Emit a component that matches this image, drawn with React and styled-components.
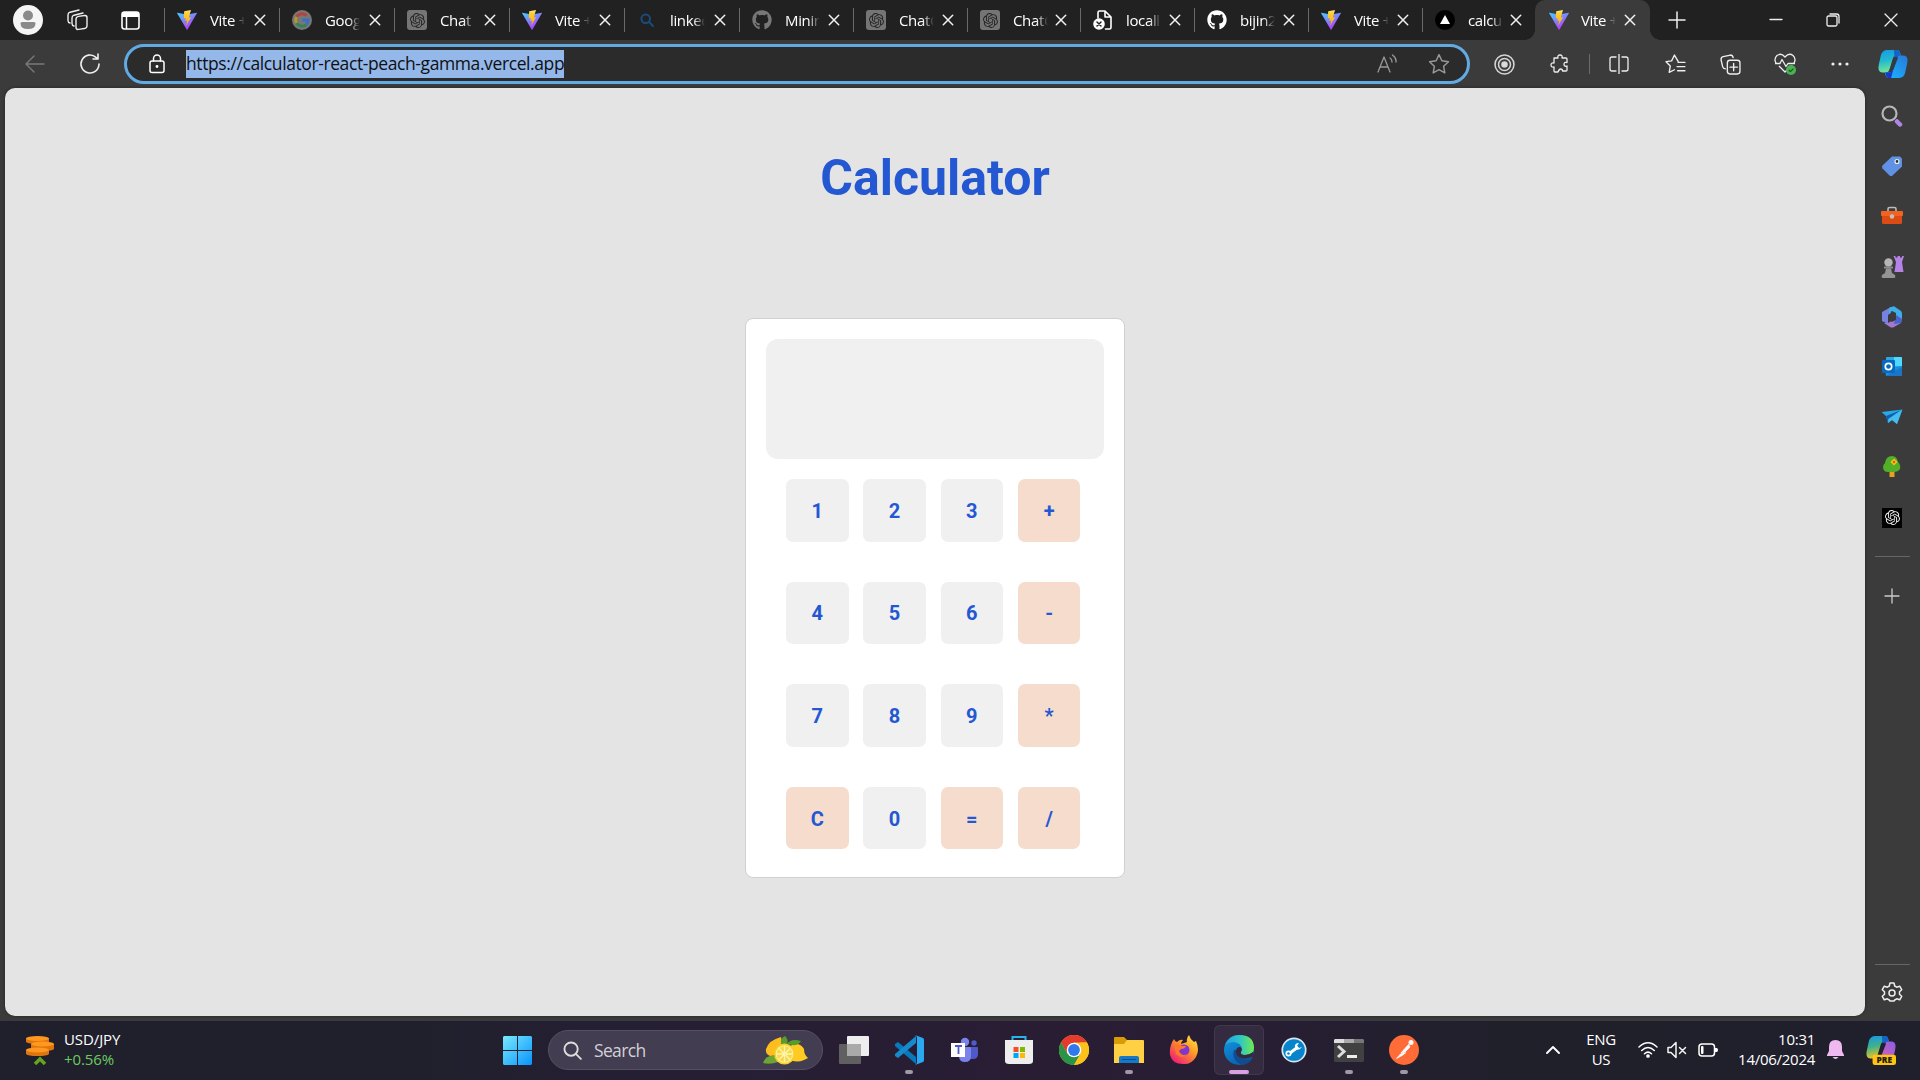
import React from "react";
import styled, { createGlobalStyle } from "styled-components";
import { FaGithub } from "react-icons/fa";
import { SiOpenai } from "react-icons/si";

const ui = `"Open Sans", "Noto Sans", sans-serif`;

const GlobalStyle = createGlobalStyle`
  * { box-sizing: border-box; }
  body { margin: 0; background: #3b3b3b; overflow: hidden; }
  button { border: 0; padding: 0; margin: 0; background: none; color: inherit; font: inherit; }
  svg { display: block; flex: none; }
`;

const Desktop = styled.div`
  width: 1920px;
  height: 1080px;
  display: flex;
  flex-direction: column;
  background: #3b3b3b;
  color: #fff;
  font-family: ${ui};
`;

const TabStrip = styled.div`
  height: 40px;
  display: flex;
  background: #212121;
`;

const Slot = styled.div`
  width: ${(p) => p.$w}px;
  height: 100%;
  flex: none;
  display: flex;
  align-items: center;
  justify-content: center;
`;

const TabList = styled.div`
  display: flex;
  margin-left: 4px;
`;

const Tab = styled.div`
  width: ${(p) => p.$w}px;
  display: flex;
  align-items: center;
  padding-left: ${(p) => (p.$active ? 14 : 13)}px;
  border-radius: ${(p) => (p.$active ? "10px 10px 0 0" : 0)};
  background: ${(p) => (p.$active ? "#3b3b3b" : "linear-gradient(#6a6a6a, #6a6a6a) 0 8px / 1px 24px no-repeat")};
  position: relative;
  &::before, &::after {
    content: "";
    display: ${(p) => (p.$active ? "block" : "none")};
    position: absolute;
    bottom: 0;
    width: 10px;
    height: 10px;
  }
  &::before { left: -10px; background: radial-gradient(circle at 0 0, transparent 9.5px, #3b3b3b 10px); }
  &::after { right: -10px; background: radial-gradient(circle at 100% 0, transparent 9.5px, #3b3b3b 10px); }
`;

const TabTitle = styled.span`
  width: 36px;
  margin-left: ${(p) => (p.$active ? 12 : 13)}px;
  margin-right: ${(p) => p.$gap}px;
  overflow: hidden;
  white-space: nowrap;
  font-size: 15px;
  line-height: 22px;
  letter-spacing: -0.35px;
  mask-image: linear-gradient(90deg, #000 65%, transparent 97%);
`;

const Toolbar = styled.div`
  height: 48px;
  display: flex;
  padding-left: 5px;
  background: #3b3b3b;
`;

const AddressBar = styled.div`
  width: 1346px;
  height: 40px;
  margin: 4px 6px 0 9px;
  display: flex;
  align-items: center;
  border: 3px solid #62aae2;
  border-radius: 20px;
  background: #2b2b2b;
`;

const Url = styled.span`
  width: 378px;
  height: 28px;
  margin-right: auto;
  background: #95b8ea;
  color: #101010;
  font-size: 17.5px;
  line-height: 27px;
  white-space: nowrap;
  letter-spacing: -0.4px;
`;

const Divider = styled.div`
  width: 1px;
  height: 20px;
  margin: 14px 1px 0 1px;
  background: #6b6b6b;
`;

const Body = styled.div`
  height: 932px;
  display: flex;
  padding: 0 0 4px 5px;
`;

const Page = styled.main`
  width: 1860px;
  height: 928px;
  display: flex;
  flex-direction: column;
  align-items: center;
  border-radius: 10px;
  background: #e4e4e4;
  font-family: Roboto, sans-serif;
  color: #2458d3;
  box-shadow: 0 0 3px #222;
`;

const Heading = styled.h1`
  margin: 60px 0 0;
  height: 60px;
  font-size: 50px;
  line-height: 60px;
  font-weight: 700;
`;

const Calculator = styled.section`
  width: 380px;
  height: 560px;
  margin-top: 110px;
  padding: 20px;
  border: 1px solid #d0d0d0;
  border-radius: 8px;
  background: #fff;
`;

const Display = styled.div`
  height: 120px;
  border-radius: 12px;
  background: #f0f0f0;
`;

const Keypad = styled.div`
  display: grid;
  grid-template-columns: repeat(4, 62.5px);
  grid-auto-rows: 62.5px;
  column-gap: 14.8px;
  row-gap: 40.1px;
  padding: 20px 0 0 20px;
`;

const Key = styled.button`
  padding-top: 1px;
  border-radius: 7px;
  background: ${(p) => (p.$accent ? "#f5dccd" : "#f0f0f0")};
  color: #2458d3;
  font-size: 20px;
  font-weight: 700;
  line-height: 24px;
`;

const Sidebar = styled.aside`
  width: 55px;
  display: flex;
  flex-direction: column;
  align-items: center;
  padding-top: 3px;
`;

const SideItem = styled.div`
  height: ${(p) => p.$h || 50.2}px;
  display: flex;
  align-items: center;
  margin-right: 1px;
`;

const SideLine = styled.div`
  width: 35px;
  height: 1px;
  margin-top: ${(p) => p.$top};
  background: #666;
`;

const Taskbar = styled.footer`
  height: 60px;
  display: flex;
  align-items: center;
  box-shadow: inset 0 1px 0 #3a3942;
  background: linear-gradient(90deg, #20202c 0, #20202c 22%, #251f34 32%, #291d34 55%, #271e33 66%, #20202b 78%, #20202c 100%);
`;

const Widget = styled.div`
  width: 490px;
  padding-left: 25px;
  display: flex;
  align-items: center;
`;

const Lines = styled.div`
  width: ${(p) => p.$w || "auto"};
  text-align: ${(p) => p.$align || "left"};
  margin-left: ${(p) => p.$ml || 0}px;
  padding-bottom: 3px;
  font-size: 15px;
  line-height: 20px;
  letter-spacing: ${(p) => p.$ls || "-0.27px"};
  white-space: nowrap;
`;

const Gain = styled.div`
  color: #6ccb5f;
`;

const SearchBox = styled.div`
  width: 275px;
  height: 40px;
  margin: 0 3.5px 0 3px;
  padding: 0 14px;
  display: flex;
  align-items: center;
  border: 1px solid #55515f;
  border-radius: 20px;
  background: #423d50;
  color: #d2d0d7;
  font-size: 17.5px;
  letter-spacing: -0.65px;
`;

const SearchText = styled.span`
  margin-left: 12px;
  margin-right: auto;
`;

const TaskApp = styled.div`
  width: 50px;
  height: 50px;
  margin: 0 2.5px;
  display: flex;
  align-items: center;
  justify-content: center;
  position: relative;
  border-radius: 6px;
  background: ${(p) => (p.$active ? "#342b41" : "transparent")};
  box-shadow: ${(p) => (p.$active ? "inset 0 0 0 1px #40384b" : "none")};
  &::after {
    content: "";
    display: ${(p) => (p.$running || p.$active ? "block" : "none")};
    position: absolute;
    bottom: 1px;
    left: ${(p) => (p.$active ? 15 : 21)}px;
    width: ${(p) => (p.$active ? 20 : 8)}px;
    height: 4px;
    border-radius: 2px;
    background: ${(p) => (p.$active ? "#d9a0e2" : "#9d99a5")};
  }
`;

const Tray = styled.div`
  height: 100%;
  margin-left: auto;
  padding-right: 14px;
  display: flex;
  align-items: center;
`;

const ChatBadge = styled.span`
  width: 20px;
  height: 20px;
  display: flex;
  align-items: center;
  justify-content: center;
  border-radius: ${(p) => (p.$dark ? 0 : 3)}px;
  background: ${(p) => (p.$dark ? "#000" : "#757575")};
  color: ${(p) => (p.$dark ? "#eee" : "#242424")};
`;

const Line = ({ s = 20, w = 1.3, c = "#eee", vb = 20, children }) => (
  <svg width={s} height={s} viewBox={`0 0 ${vb} ${vb}`} fill="none" stroke={c} strokeWidth={w} strokeLinecap="round" strokeLinejoin="round">
    {children}
  </svg>
);

const ViteIcon = () => (
  <svg width="20" height="20" viewBox="0 0 20 20">
    <defs>
      <linearGradient id="vp" x1="0" y1="0" x2=".6" y2="1"><stop stopColor="#41d1ff" /><stop offset="1" stopColor="#bd34fe" /></linearGradient>
      <linearGradient id="vb" x1="0" y1="0" x2="0" y2="1"><stop stopColor="#ffea83" /><stop offset=".2" stopColor="#ffd030" /><stop offset="1" stopColor="#ffa800" /></linearGradient>
    </defs>
    <path d="M.2 2.8 10 4.5l9.8-1.7c.2 0 .3.1.2.3L10.3 19.8c-.1.2-.4.2-.5 0L0 3.1c0-.2 0-.3.2-.3Z" fill="url(#vp)" />
    <path d="M14 0 7.2 1.3 6.7 8.5l2-.4-.5 3 2-.5-1.1 5.2 5-8.6-2.3.4L14 0Z" fill="url(#vb)" />
  </svg>
);

const GoogleIcon = () => (
  <svg width="20" height="20" viewBox="0 0 20 20" fill="none" strokeWidth="2.800">
    <circle cx="10" cy="10" r="10" fill="#777" />
    <path d="M14.600 5.800A6.200 6.200 0 0 0 4.600 6.900" stroke="#b94137" />
    <path d="M4.600 6.900a6.200 6.200 0 0 0 0 6.200" stroke="#b59728" />
    <path d="M4.600 13.100a6.200 6.200 0 0 0 9.500 1.500" stroke="#328550" />
    <path d="M10.200 10h6a6.200 6.200 0 0 1-2.100 4.600" stroke="#3b6fc6" />
  </svg>
);

const SearchTabIcon = () => (
  <Line c="#194c7b" w="2"><circle cx="8.7" cy="8.7" r="4.3" /><path d="m12 12 4 4" /></Line>
);

const LocalIcon = () => (
  <Line c="#fff" w="1.6">
    <path d="M5 8V2.5C5 1.5 5.5 1 6.500 1H12l6 6v10.500c0 1-.6 1.500-1.500 1.500h-4M12 1v6h6" />
    <circle cx="6" cy="14" r="5" fill="#fff" />
    <path d="m4 12 4 4m0-4-4 4" stroke="#222" strokeWidth="1.5" />
  </Line>
);

const VercelIcon = () => (
  <svg width="20" height="20" viewBox="0 0 20 20"><circle cx="10" cy="10" r="10" fill="#000" /><path d="m10 5 5 9H5Z" fill="#fff" /></svg>
);

const ChatIcon = ({ dark }) => <ChatBadge $dark={dark}><SiOpenai size={15} /></ChatBadge>;

const CloseIcon = () => <Line s={12} vb={12} w="1.5" c="#f2f2f2"><path d="m1.300 1.300 9.400 9.400m0-9.400-9.400 9.400" /></Line>;

const tabs = [
  [115, <ViteIcon />, "Vite +"],
  [115, <GoogleIcon />, "Goog"],
  [115, <ChatIcon />, "Chat"],
  [115, <ViteIcon />, "Vite +"],
  [115, <SearchTabIcon />, "linked"],
  [114, <FaGithub size={20} color="#777" />, "Minin"],
  [114, <ChatIcon />, "ChatG"],
  [113, <ChatIcon />, "ChatG"],
  [114, <LocalIcon />, "locall"],
  [114, <FaGithub size={20} color="#fff" />, "bijin2"],
  [114, <ViteIcon />, "Vite +"],
  [113, <VercelIcon />, "calcu"],
  [115, <ViteIcon />, "Vite +"],
];

const Copilot = ({ s = 32, pre }) => {
  const id = pre ? "pre" : "std";
  return (
    <svg width={s} height={s} viewBox="0 0 32 32">
      <defs>
        <linearGradient id={`a-${id}`} x1="0" y1="0" x2=".2" y2="1"><stop stopColor="#1499e8" /><stop offset=".5" stopColor={pre ? "#3fb08c" : "#22b9cf"} /><stop offset="1" stopColor={pre ? "#e5c529" : "#72e39a"} /></linearGradient>
        <linearGradient id={`b-${id}`} x1="1" y1="0" x2="0" y2="1"><stop stopColor={pre ? "#8c5bea" : "#2878dc"} /><stop offset="1" stopColor={pre ? "#f36a98" : "#19b8ff"} /></linearGradient>
      </defs>
      <path d="M11 1h9c3 0 3.500 2 4.500 6h-5c-2 0-3 1-4 4l-3 10c-1 3-2 4-5 4H5c-5 0-5-5-4-9l2-9c1-4 3-6 8-6Z" fill={`url(#a-${id})`} />
      <path d="M17 1h3c3 0 3.500 2 4.500 7h-4l-3 1Z" fill="#1562c8" />
      <path d="M21 31h-9c-3 0-3.500-2-4.500-6h5c2 0 3-1 4-4l3-10c1-3 2-4 5-4H27c5 0 5 5 4 9l-2 9c-1 4-3 6-8 6Z" fill={`url(#b-${id})`} />
      <path d="M8 25h5l3-2-2 8h-2c-3 0-3-2-4-6Z" fill={pre ? "#ef9040" : "#1738cf"} />
      <path d="M17.500 9h4l-5.500 14h-4Z" fill={pre ? "#24212f" : "#303b48"} />
      {pre && (
        <>
          <rect x="7" y="21" width="25" height="11" rx="2.500" fill="#ffc414" />
          <text x="19.500" y="29.600" textAnchor="middle" fontFamily="Open Sans, sans-serif" fontSize="9" fontWeight="800" fill="#221b10">PRE</text>
        </>
      )}
    </svg>
  );
};

const sideIcons = [
  <svg width="22" height="22" viewBox="0 0 22 22" fill="none"><circle cx="8.500" cy="8.500" r="7" stroke="#b4b6b8" strokeWidth="2.200" /><path d="m16 16.500 3 3" stroke="#b184e7" strokeWidth="4.500" strokeLinecap="round" /></svg>,
  <svg width="22" height="22" viewBox="0 0 22 22"><path d="M11 1.500h8L21 3.500v8L11.500 20.500q-1.500 1-3 0L1.500 13.500q-1-1.500 0-3Z" fill="#5f92e5" /><circle cx="16" cy="6.500" r="2" fill="#333" stroke="#eee" strokeWidth="1.200" /></svg>,
  <svg width="24" height="22" viewBox="0 0 24 22"><path d="M8 7V4q0-1.500 1.500-1.500h5Q16 2.500 16 4v3" fill="none" stroke="#bbb" strokeWidth="1.600" /><rect x="2" y="8" width="20" height="11" rx="1.500" fill="#dc4b13" /><rect x="1" y="6" width="22" height="5" rx="1" fill="#f26321" /><circle cx="12" cy="11.500" r="2.200" fill="#c2c2c2" /></svg>,
  <svg width="24" height="24" viewBox="0 0 24 24"><circle cx="8.500" cy="7.500" r="4.200" fill="#b5b5b5" /><path d="M4 11.500h9v2H4Z" fill="#8d8d8d" /><path d="M6 13.500h5l1 4.500 3 2q1 3-1 3H3q-2 0-1-3l3-2Z" fill="#949494" /><path d="M13.500 1h2v1.500h2V1h2.500v1.500h2V1H24l-2 6 1.500 10h-9L16 7Z" fill="#b582e6" /></svg>,
  <svg width="22" height="22" viewBox="0 0 22 22"><path d="m1 6 9-5v6L7 9v9L1 15Z" fill="#7682df" /><path d="m10 1 3-.7L20 5q1 1 1 3v6l-6-4V7L11 5 8 7V2Z" fill="#3caee8" /><path d="m21 12-1 5-7 4q-2 1-4 0l-6-4 4 0 7-4V9Z" fill="#a477d2" /><path d="m14 13 1-4 6 4-1 4-7 1Z" fill="#4664cb" /><path d="m11 7 4 2.300v4.400L11 16l-3.500-2.300V9Z" fill="#3b3b3b" /></svg>,
  <svg width="22" height="22" viewBox="0 0 22 22"><rect x="5" y="1" width="16" height="18" rx="1" fill="#28a8ea" /><path d="M13 1h7q1 0 1 1v8h-8Z" fill="#50d9ff" /><path d="m4 13 17-3v10H5Z" fill="#1490df" /><path d="m5 20 16-9v9Z" fill="#1976c7" /><rect x="1" y="4" width="13" height="13" rx="1" fill="#0869bf" /><circle cx="7.500" cy="10.500" r="3.200" fill="none" stroke="#fff" strokeWidth="1.700" /></svg>,
  <svg width="22" height="18" viewBox="0 0 22 18"><path d="M.5 4 21.500 1.500 16 16l-5-4-4 3-2-7Z" fill="#28a8e9" /><path d="M5 8 20 2 7 11v4Z" fill="#0f60ab" /><path d="m7 15 1-4L21 2l-5 14-5-4Z" fill="#46bcef" /></svg>,
  <svg width="20" height="24" viewBox="0 0 20 24"><path d="M7.500 16h5v6h-5Z" fill="#e5a31c" /><path d="M10 1q5 0 6 6 3 3 2 7-2 3-6 3H6q-5 0-5-5 0-2 2-4Q4 1 10 1Z" fill="#51af28" /><path d="m12 4.500 2.500 2.500-2.500 2.500L9.500 7Z" fill="#f2c414" stroke="#f2c414" strokeWidth="1.500" /><circle cx="12" cy="7" r="1.200" fill="#e35316" /></svg>,
  <ChatIcon dark />,
];

const VsCode = () => (
  <svg width="30" height="30" viewBox="0 0 30 30"><path d="m1 9 3-2L22 22v7L1 11Z" fill="#0779bd" /><path d="m1 21 3 2L22 8V1L1 19Z" fill="#168acb" /><path d="m21 0 8 3q1 .5 1 2v20q0 1.500-1 2l-8 3q2-1 2-3V3q0-2-2-3Z" fill="#28a9f1" /></svg>
);

const taskApps = [
  { icon: <svg width="30" height="30" viewBox="0 0 30 30"><rect x="8" y="1" width="22" height="20" rx="1" fill="#eee" /><rect x="0" y="9" width="22" height="20" rx="1" fill="#606060" /><path d="M8 9h13q1 0 1 1v11H8Z" fill="#aaa" /></svg> },
  { icon: <VsCode />, running: true },
  { icon: <svg width="28" height="26" viewBox="0 0 28 26"><circle cx="15" cy="5" r="4.200" fill="#7b83eb" /><circle cx="24" cy="6" r="2.700" fill="#5059c9" /><path d="M18 10h9q1 0 1 1v6q0 5-5 5h-5Z" fill="#5059c9" /><path d="M9 10h11q1 0 1 1v8q0 6-6 6t-6-6Z" fill="#7b83eb" /><path d="M1 6h14v14H1Z" fill="#fff" /><path d="M5 9h7M8.500 9v8" stroke="#5059c9" strokeWidth="1.800" /></svg> },
  { icon: <svg width="30" height="30" viewBox="0 0 30 30"><path d="M8.500 6V2h13v4" fill="none" stroke="#25b4ec" strokeWidth="2" /><path d="M1 5h28v21q0 3-4 3H5q-4 0-4-3Z" fill="#eee" /><path d="M9.500 12h5v5h-5Z" fill="#f25022" /><path d="M16 12h5v5h-5Z" fill="#7fba00" /><path d="M9.500 18h5v5h-5Z" fill="#00a4ef" /><path d="M16 18h5v5h-5Z" fill="#ffb900" /></svg> },
  { icon: <svg width="30" height="30" viewBox="0 0 30 30"><circle cx="15" cy="15" r="15" fill="#fbc21c" /><path d="M2 7.500A15 15 0 0 1 28 7.500H15L8.500 18.700Z" fill="#e33b2e" /><path d="M2 7.500A15 15 0 0 0 15 30l6.500-11.200H8.500Z" fill="#299347" /><path d="m15 30 6.500-11.200V7.500H28A15 15 0 0 1 15 30Z" fill="#fbc21c" /><circle cx="15" cy="15" r="7.300" fill="#fff" /><circle cx="15" cy="15" r="5.900" fill="#3079ed" /></svg> },
  { icon: <svg width="30" height="28" viewBox="0 0 30 28"><path d="M0 2q0-1 1-1h9l3 3v6H0Z" fill="#d99b08" /><path d="M0 8h10l3-4h16q1 0 1 1v22H0Z" fill="#ffd044" /><path d="M5 27v-5q0-2 2-2h16q2 0 2 2v5Z" fill="#1678c8" /><path d="M8 23.500h14" stroke="#084d8c" /></svg>, running: true },
  { icon: <svg width="30" height="30" viewBox="0 0 30 30"><defs><linearGradient id="ff" x1="1" y1="0" x2=".2" y2="1"><stop stopColor="#fff24a" /><stop offset=".45" stopColor="#ff9a25" /><stop offset="1" stopColor="#f01878" /></linearGradient></defs><path d="M5 4q1 3 3 3 3-3 6-2-2 2-2 4l6-2q-1-4 2-7 1 4 5 7l2-1q4 9 0 16-5 8-13 7Q3 29 1 20 0 11 5 4Z" fill="url(#ff)" /><circle cx="15" cy="15" r="5.500" fill="#8037d0" /><path d="M5 10q4-2 7 1l5 0q-1 3-5 3l-2 2q3 6 8 3-5 6-11 0Z" fill="#ff7727" /></svg> },
  { icon: <svg width="30" height="30" viewBox="0 0 30 30"><defs><linearGradient id="ea" x1="0" x2="1"><stop stopColor="#249ee2" /><stop offset=".5" stopColor="#2dc5c8" /><stop offset="1" stopColor="#70eb4e" /></linearGradient><linearGradient id="eb" x1="0" y1="0" x2=".5" y2="1"><stop stopColor="#159bdf" /><stop offset="1" stopColor="#0860b5" /></linearGradient></defs><circle cx="15" cy="15" r="15" fill="url(#eb)" /><path d="M1 10Q5 0 15 0q15 0 15 13 0 7-8 7-5 0-6-2l2-3q0-7-8-8-5 0-9 3Z" fill="url(#ea)" /><path d="M10 15q-3 11 9 15 6-1 10-7-6 3-12 0-5-3-4-8Z" fill="#114c91" /><path d="M12 17q0-5 4-5 3 1 1 5-1 3 4 3 4 0 8-3l1 4q-9 5-15 1-3-2-3-5Z" fill="#342b41" /></svg>, active: true },
  { icon: <svg width="26" height="26" viewBox="0 0 26 26"><circle cx="13" cy="13" r="11.700" fill="#0685cc" stroke="#dbe9ef" strokeWidth="1.700" /><path d="m9 16 8-6" stroke="#fff" strokeWidth="3" /><circle cx="7.500" cy="16.500" r="2.200" fill="none" stroke="#fff" strokeWidth="1.700" /><path d="M18 6q-5 0-4 5 3 4 7-1l-3 1-2-2Z" fill="#fff" /></svg> },
  { icon: <svg width="30" height="23" viewBox="0 0 30 23"><rect width="30" height="23" rx="1.500" fill="#414141" /><path d="M1 0h9v4H0V1Z" fill="#ddd" /><path d="M10 0h10v4H10Z" fill="#aaa" /><path d="M20 0h9l1 1v3H20Z" fill="#777" /><path d="m4 7 6 5.500L4 18" fill="none" stroke="#ddd" strokeWidth="3" /><path d="M13 17.500h10" stroke="#eee" strokeWidth="3" /></svg>, running: true },
  { icon: <svg width="30" height="30" viewBox="0 0 30 30"><circle cx="15" cy="15" r="15" fill="#ff6c37" /><circle cx="22" cy="7.500" r="2.500" fill="#fff" /><path d="m19.500 9.500 1.500 2.500-5 5-4 1Zm-7.500 9-4.500 5 5.500-3 4-3" fill="#fff" stroke="#fff" strokeWidth=".8" /></svg>, running: true },
];

const Lemons = () => (
  <svg width="45" height="30" viewBox="0 0 45 30">
    <path d="M3 14Q6 5 18 2l1 5-3 13-9 1Q2 19 3 14Z" fill="#fdbd1e" />
    <path d="M27 11q9-5 14 3 0 6 4 9l-4 2q-9 4-17-2Z" fill="#ffcb22" />
    <path d="M18 9q-1-6 4-8 4 4 2 8Zm6 0q4-6 14-3-3 5-9 4Z" fill="#579c2d" />
    <path d="M0 28q3-9 13-7 2 3 2 6-8 3-15 1Z" fill="#6ba635" />
    <circle cx="21.500" cy="19" r="10.500" fill="#f8ce28" /><circle cx="21.500" cy="19" r="8.800" fill="#fff2a0" /><circle cx="21.500" cy="19" r="7.800" fill="#f5d94b" />
    <path d="M21.500 11v16M14 19h15M16 13.500l11 11m0-11-11 11" stroke="#fff4ae" strokeWidth="1.300" />
  </svg>
);

const keys = ["1", "2", "3", "+", "4", "5", "6", "-", "7", "8", "9", "*", "C", "0", "=", "/"];
const accents = "+-*C=/";

const star = "m10 1.500 2.600 5.600 6 .8-4.400 4.200 1.100 6L10 15.200 4.700 18.100l1.100-6L1.400 7.900l6-.8Z";

export default function App() {
  return (
    <Desktop>
      <GlobalStyle />
      <TabStrip>
        <Slot $w={56}>
          <svg width="30" height="30" viewBox="0 0 30 30"><circle cx="15" cy="15" r="15" fill="#f5f5f5" /><circle cx="15" cy="10.500" r="5" fill="#8a8a8a" /><path d="M7.500 18.500Q7.500 17 9 17h12q1.500 0 1.500 1.500Q22.500 24 15 24t-7.500-5.500Z" fill="#8a8a8a" /></svg>
        </Slot>
        <Slot $w={44}>
          <Line s={22} vb={22} w="1.400"><rect x="9" y="7" width="11" height="13" rx="2.500" transform="skewY(-8) translate(0 2)" /><path d="M7 17q-2-.5-2-2.500V9q0-2 2-2.800L16 4M3 14q-2-.5-2-2.500V6q0-2 2-2.800L12 1" /></Line>
        </Slot>
        <Slot $w={60}>
          <svg width="19" height="19" viewBox="0 0 19 19"><rect x="1" y="1" width="17" height="17" rx="2.500" fill="none" stroke="#fff" strokeWidth="1.600" /><path d="M1 3q0-2 2-2h13q2 0 2 2v3H1Z" fill="#fff" /><path d="M5.500 6v12" stroke="#fff" strokeWidth="1.500" /></svg>
        </Slot>
        <TabList>
          {tabs.map(([w, icon, title], i) => (
            <Tab key={i} $w={w} $active={i === 12}>
              {icon}
              <TabTitle $active={i === 12} $gap={i === 12 ? 7 : w - 107}>{title}</TabTitle>
              <CloseIcon />
            </Tab>
          ))}
        </TabList>
        <Slot $w={54}><Line s={18} vb={18} w="1.500"><path d="M9 1v16M1 9h16" /></Line></Slot>
        <Slot $w={43} />
        <Slot $w={57}><Line s={14} vb={14} w="1.300"><path d="M1 6.500h12" /></Line></Slot>
        <Slot $w={57}><Line s={14} vb={14} w="1.300"><rect x="1" y="3" width="10" height="10" rx="1.500" /><path d="M4 1h6.500Q13 1 13 3.500V10" /></Line></Slot>
        <Slot $w={59}><Line s={14} vb={14} w="1.300"><path d="m1 1 12 12M13 1 1 13" /></Line></Slot>
      </TabStrip>
      <Toolbar>
        <Slot $w={60}><Line c="#7a7a7a" w="1.400"><path d="M19 10H1m8-8-8 8 8 8" /></Line></Slot>
        <Slot $w={50}><Line s={22} vb={22} w="1.600"><path d="M20 11a9 9 0 1 1-3-6.700L19 6M19 1v5h-5" /></Line></Slot>
        <AddressBar>
          <Slot $w={59}>
            <Line w="1.500" c="#fff"><rect x="3" y="7" width="14" height="11.500" rx="2" /><path d="M6.500 7V4.500a3.500 3.500 0 0 1 7 0V7" /><circle cx="10" cy="12.500" r=".7" fill="#fff" /></Line>
          </Slot>
          <Url>https://calculator-react-peach-gamma.vercel.app</Url>
          <Slot $w={46}><Line s={20} c="#999"><path d="m1 18 6-15 6 15M3 13h8M13 4q2 1 2 4M15.500 1q4 3 3.500 7" /></Line></Slot>
          <Slot $w={57}><Line s={22} c="#999"><path d={star} /></Line></Slot>
        </AddressBar>
        <Slot $w={56}><Line s={21} c="#d5d5d5" w="1.500"><circle cx="10" cy="10" r="9" /><circle cx="10" cy="10" r="5.700" /><circle cx="10" cy="10" r="2.400" fill="#ddd" /></Line></Slot>
        <Slot $w={56}><Line><path d="M4 4h4q-.8-3 2-3t2 3h4q1 0 1 1v3.500q-3-.8-3 1.800t3 1.700v4q0 1-1 1h-3.500q0-2-1.700-2T8 18H5q-1 0-1-1v-4q-3 .5-3-2t3-2Z" /></Line></Slot>
        <Divider />
        <Slot $w={56}><Line><path d="M10 0v20M7 3H3Q1 3 1 5v10q0 2 2 2h4m6-14h4q2 0 2 2v10q0 2-2 2h-4" /></Line></Slot>
        <Slot $w={56}><Line s={21}><path d="M12.500 7 9 1 6.300 6.500 1 7.300l4 4.200-1 6 5-2.500M12.500 8H19m-7.500 4H19m-7 4h7" /></Line></Slot>
        <Slot $w={54}><Line s={21}><rect x="7" y="6" width="12" height="13" rx="2.500" /><path d="M13 9v7m-3.500-3.500h7M5 14q-2 0-2.500-2L1 5.500Q.8 3 3 2.500l7-1.500q2 0 2.500 2.500" /></Line></Slot>
        <Slot $w={56}>
          <svg width="22" height="22" viewBox="0 0 22 22" fill="none" stroke="#eee" strokeWidth="1.300" strokeLinejoin="round"><path d="M2 10Q-.5 6 3 2.500 7-.5 11 4q4-4.500 8-1.500Q22.500 6 20 10M5 13l6 6 2-2M1 10.500h5l2-4 4 7 2-3h7" /><circle cx="17" cy="17" r="5" fill="#4ab253" stroke="none" /><path d="m14.800 17 1.600 1.600 3-3" stroke="#21572b" /></svg>
        </Slot>
        <Slot $w={54}><svg width="18" height="4" viewBox="0 0 18 4" fill="#eee"><circle cx="2" cy="2" r="1.600" /><circle cx="9" cy="2" r="1.600" /><circle cx="16" cy="2" r="1.600" /></svg></Slot>
        <Slot $w={51}><Copilot s={30} /></Slot>
      </Toolbar>
      <Body>
        <Page>
          <Heading>Calculator</Heading>
          <Calculator>
            <Display />
            <Keypad>
              {keys.map((k) => <Key key={k} $accent={accents.includes(k)}>{k}</Key>)}
            </Keypad>
          </Calculator>
        </Page>
        <Sidebar>
          {sideIcons.map((icon, i) => <SideItem key={i}>{icon}</SideItem>)}
          <SideLine $top="13px" />
          <SideItem $h={78}><Line s={16} vb={16} c="#ccc"><path d="M8 1v14M1 8h14" /></Line></SideItem>
          <SideLine $top="auto" />
          <SideItem $h={51}>
            <Line s={22} vb={22} w="1.500"><circle cx="11" cy="13" r="3" /><path d="M9 3h4l.7 3 2 1.200 3-1 2 3.500-2.200 2v2.600l2.200 2-2 3.500-3-1-2 1.200L13 21H9l-.7-1-2-1.200-3 1-2-3.500 2.200-2V11.700l-2.200-2 2-3.500 3 1 2-1.200Z" /></Line>
          </SideItem>
        </Sidebar>
      </Body>
      <Taskbar>
        <Widget>
          <svg width="30" height="30" viewBox="0 0 30 30"><g fill="#df7411"><path d="M1 15v4q2 2 11.500 2T24 19v-4Z" /><path d="M6 9v5q3 2 12 2t11-2V9Z" /><path d="M1 3v4q3 2 11.500 2T24 7V3Z" /></g><g fill="#ff981f"><ellipse cx="12.500" cy="15" rx="11.500" ry="2.500" /><ellipse cx="17.500" cy="9" rx="11.500" ry="2.500" /><ellipse cx="12.500" cy="3.500" rx="11.500" ry="2.500" /></g><path d="m10 29 5-5 5 5" fill="none" stroke="#65a51b" strokeWidth="3.500" /></svg>
          <Lines $ml={9} $ls="-0.1px">USD/JPY<Gain>+0.56%</Gain></Lines>
        </Widget>
        <Slot $w={55}>
          <svg width="29" height="29" viewBox="0 0 29 29"><defs><linearGradient id="wl" gradientUnits="userSpaceOnUse" x1="0" y1="0" x2="29" y2="29"><stop stopColor="#79e9ff" /><stop offset="1" stopColor="#0794fb" /></linearGradient></defs><path d="M1 0h13v14H0V1Zm14 0h13l1 1v13H15ZM0 15h14v14H1l-1-1Zm15 0h14v13l-1 1H15Z" fill="url(#wl)" /></svg>
        </Slot>
        <SearchBox>
          <Line s={19} c="#ddd" w="2"><circle cx="8.500" cy="8.500" r="7" /><path d="m13.800 13.800 5 5" /></Line>
          <SearchText>Search</SearchText>
          <Lemons />
        </SearchBox>
        {taskApps.map((a, i) => <TaskApp key={i} $active={a.active} $running={a.running}>{a.icon}</TaskApp>)}
        <Tray>
          <Slot $w={30}><Line s={14} vb={14} w="1.900" c="#fff"><path d="m1 10 6-6 6 6" /></Line></Slot>
          <Lines $w="66px" $align="center">ENG<br />US</Lines>
          <Slot $w={28}><Line s={20} c="#fff" w="1.500"><path d="M1 7q9-8.500 18 0M3.700 10.500q6.300-6 12.600 0M6.500 13.700q3.500-3.200 7 0" /><circle cx="10" cy="16" r="1.100" fill="#fff" /></Line></Slot>
          <Slot $w={30}><Line s={20} c="#f4f4f4" w="1.500"><path d="M1 7.500h3l5-5v15l-5-5H1ZM12.500 7.500l6 6m0-6-6 6" /></Line></Slot>
          <Slot $w={32}><svg width="20" height="14" viewBox="0 0 20 14"><rect x="1" y="1" width="15.500" height="12" rx="3" fill="none" stroke="#fff" strokeWidth="1.500" /><rect x="3" y="3" width="2.500" height="8" rx="1" fill="#fff" /><path d="M17 5h1.500q1.500 0 1.500 2t-1.500 2H17Z" fill="#fff" /></svg></Slot>
          <Lines $w="91px" $align="right">10:31<br />14/06/2024</Lines>
          <Slot $w={40}><svg width="17" height="20" viewBox="0 0 17 20"><path d="M8.500 0Q15 0 15 7v4l2 4v1H0v-1l2-4V7Q2 0 8.500 0Z" fill="#edb9f0" /><path d="M5.500 17h6q-3 4-6 0Z" fill="#edb9f0" /></svg></Slot>
          <Slot $w={51}><Copilot s={30} pre /></Slot>
        </Tray>
      </Taskbar>
    </Desktop>
  );
}
